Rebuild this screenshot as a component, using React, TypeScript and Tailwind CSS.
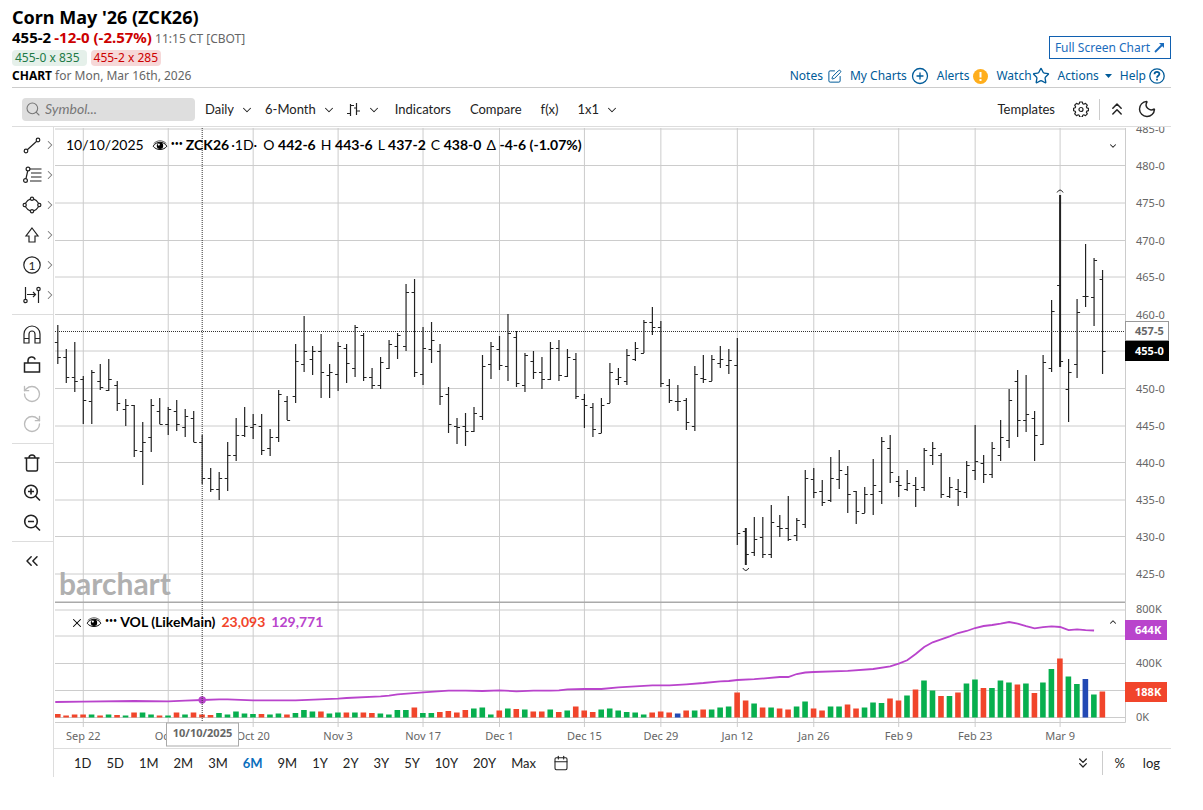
import React, { useState } from 'react';
import {
  ChevronDown, ChevronUp, ChevronRight, ChevronsDown, ChevronsLeft, ChevronsUp,
  Moon, Search, SquarePen, Star, CirclePlus, X, Calendar, RotateCcw, RotateCw,
} from 'lucide-react';

type Bar = [high: number, low: number, open: number, close: number];

// one entry per session, in plot units: high, low, open, close
const bars: Bar[] = [
  [325, 364, 342, 357], [349, 383, 357, 377], [342, 392, 377, 381], [376, 424, 379, 400],
  [370, 424, 401, 372], [364, 390, 381, 387], [359, 391, 390, 379], [381, 411, 385, 403],
  [399, 426, 409, 405], [405, 457, 405, 450], [422, 485, 451, 442], [399, 452, 437, 405],
  [398, 424, 411, 424], [407, 435, 424, 409], [400, 431, 411, 424], [409, 437, 427, 416],
  [411, 442, 418, 442], [435, 484, 442, 478], [468, 492, 478, 489], [472, 500, 489, 478],
  [442, 491, 478, 455], [418, 461, 455, 435], [407, 437, 435, 426], [414, 439, 427, 424],
  [414, 455, 426, 450], [429, 456, 448, 437], [390, 442, 437, 394], [396, 420, 401, 420],
  [344, 403, 396, 361], [316, 372, 364, 351], [346, 375, 359, 351], [334, 398, 351, 372],
  [364, 398, 375, 372], [342, 391, 374, 346], [344, 383, 348, 363], [325, 377, 368, 327],
  [333, 381, 335, 377], [368, 389, 377, 385], [357, 389, 385, 362], [340, 369, 368, 344],
  [333, 359, 346, 335], [284, 351, 346, 292], [279, 377, 292, 372], [327, 385, 374, 348],
  [322, 363, 349, 340], [344, 405, 351, 396], [387, 433, 394, 424], [418, 444, 426, 427],
  [413, 446, 426, 431], [407, 432, 431, 413], [355, 420, 416, 366], [342, 379, 364, 346],
  [336, 370, 349, 365], [314, 381, 366, 333], [331, 387, 337, 383], [353, 392, 385, 355],
  [351, 379, 361, 372], [357, 389, 372, 379], [342, 380, 379, 348], [340, 381, 348, 375],
  [349, 377, 376, 357], [353, 399, 359, 396], [394, 428, 399, 405], [403, 437, 407, 429],
  [398, 433, 433, 405], [363, 403, 403, 372], [368, 385, 379, 377], [349, 385, 381, 355],
  [342, 361, 359, 348], [320, 353, 353, 322], [307, 335, 322, 327], [321, 387, 327, 383],
  [379, 403, 385, 400], [385, 411, 401, 401], [398, 430, 400, 422], [366, 431, 426, 374],
  [355, 383, 378, 379], [355, 381, 381, 359], [346, 368, 363, 359], [349, 374, 365, 360],
  [338, 545, 365, 533], [528, 565, 531, 554], [517, 556, 552, 539], [517, 558, 537, 554],
  [505, 558, 554, 522], [515, 537, 526, 528], [496, 541, 528, 539], [518, 541, 535, 520],
  [470, 528, 524, 478], [468, 498, 479, 492], [480, 506, 491, 502], [457, 502, 500, 478],
  [450, 489, 479, 470], [466, 513, 474, 494], [491, 524, 491, 511], [487, 513, 513, 494],
  [459, 515, 494, 485], [437, 504, 491, 441], [435, 483, 448, 472], [476, 497, 481, 485],
  [470, 491, 489, 483], [477, 507, 485, 489], [448, 491, 487, 450], [442, 465, 455, 448],
  [453, 498, 455, 494], [477, 498, 496, 487], [479, 506, 489, 491], [461, 498, 492, 465],
  [425, 480, 470, 461], [455, 483, 463, 474], [442, 478, 474, 448], [420, 461, 455, 437],
  [389, 448, 440, 400], [370, 437, 381, 420], [375, 432, 420, 414], [411, 461, 418, 435],
  [355, 445, 444, 362], [300, 372, 368, 311], [195, 367, 285, 361], [359, 422, 389, 372],
  [299, 378, 364, 312], [244, 307, 296, 296], [258, 326, 297, 260], [270, 374, 279, 351],
];

// r = down day, g = up day, b = unchanged; the number is the height of the column
const volumes = (
  'r3.5 r2 r3 r3 g3 r2 g3 r2.5 g2 r5 g5 g3 r2 g2 r5 g3 r5 r3 r2.5 g4.5 g3 g6 g4 g3.5 r3.5 g3 g4 r3 g4.5 g7.5 g6 ' +
  'r6 g4 g5 r5 g5 r5 r4.5 g4 g3 g7.5 g7.5 r10 g4.5 g4.5 r5.5 r6.5 r5 r7.5 g9 g10 g3 r7 g9 r8.5 g8 r6 r6 g8 r5.5 ' +
  'g7 r11 r7 r5.5 g8 g9 g7 g5.5 g5 g3 r5 r6 r5 b4 r7 g7 r8 g8 g10 g11 r25 r17 g14 r10 g10 r9 r8 g11 g16 r9 r7 ' +
  'g11 g11 r13 r9 g10 g15 g14.5 r19 r17 g22 r28 g37 g27 r21.5 g21.5 r25 g34 g38 r29.5 g29.5 g37 g35 r33 g34 r24.5 ' +
  'g35 g48.5 r59 g41 g33.5 b38.5 g23 r26'
).split(' ');

const volumeFill: Record<string, string> = {
  r: '#f1452b',
  g: '#07af4e',
  b: '#2349b4',
};

// open interest: session index, y
const openInterest: [number, number][] = [
  [-0.3, 702], [3, 701.7], [9, 701], [13, 701.3], [15, 700.6], [17, 700], [19, 699.3], [20, 699.3], [23, 700.3],
  [28, 700.3], [33, 698.7], [34, 698], [38, 696.4], [39, 695.7], [40, 694.3], [43, 692.3], [46, 690.7],
  [48, 690.7], [50, 691], [52, 690.4], [54, 691.3], [56, 690.7], [58, 690.7], [59, 690.4], [60, 689.4],
  [62, 689], [64, 689], [66, 687.3], [68, 686.4], [70, 685.3], [72, 685.3], [74, 684.3], [76, 683],
  [78, 681.3], [79, 681], [80, 680], [82, 679.2], [85, 677], [86, 677], [87, 674], [88, 672.5], [89, 672],
  [93, 670.8], [96, 669], [98, 666.4], [99, 663.7], [100, 660.3], [101, 654], [102, 647], [103, 642.3],
  [104, 639.3], [105, 636.3], [106, 633], [107, 631], [108, 628], [109, 626], [110, 625], [111, 623.7],
  [112, 622], [113, 623.7], [114, 626.2], [115, 628.3], [116, 627.2], [117, 626.3], [118, 627], [119, 630.2],
  [120, 629.4], [121, 630.2], [122, 630.5],
];

const priceAxis: [string, number][] = [
  ['485-0', 129], ['480-0', 165.5], ['475-0', 203], ['470-0', 240.5], ['465-0', 277], ['460-0', 314.5],
  ['455-0', 351], ['450-0', 388.5], ['445-0', 426], ['440-0', 462.5], ['435-0', 500], ['430-0', 536.5],
  ['425-0', 574],
];

const volumeAxis: [string, number][] = [['800K', 610], ['', 636], ['400K', 663.5], ['', 690.5], ['0K', 717.5]];

const dateAxis: [string, number][] = [
  ['Sep 22', 3], ['Oct 6', 13], ['Oct 20', 23], ['Nov 3', 33], ['Nov 17', 43], ['Dec 1', 52], ['Dec 15', 62],
  ['Dec 29', 71], ['Jan 12', 80], ['Jan 26', 89], ['Feb 9', 99], ['Feb 23', 108], ['Mar 9', 118],
];

const ranges = ['1D', '5D', '1M', '2M', '3M', '6M', '9M', '1Y', '2Y', '3Y', '5Y', '10Y', '20Y', 'Max'];

const x = (i: number) => 57.8 + i * 8.494;

function Icon({ children, size = 20, className = '' }: { children: React.ReactNode; size?: number; className?: string }) {
  return (
    <svg width={size} height={size} viewBox="0 0 20 20" fill="none" stroke="currentColor" strokeWidth="1.2" className={`shrink-0 ${className}`}>
      {children}
    </svg>
  );
}

function EyeIcon() {
  return (
    <Icon size={16}>
      <path d="M1.5 11.5C5 5 15 5 18.5 11.5C15 17 5 17 1.5 11.5Z" strokeWidth="1.2" />
      <path d="M2 8.500C6 3.500 14 3.500 18 8.500" strokeWidth="0.800" />
      <circle cx="10" cy="11" r="4" fill="currentColor" stroke="none" />
      <circle cx="8.5" cy="9.400" r="1.400" fill="white" stroke="none" />
    </Icon>
  );
}

function GearIcon() {
  return (
    <svg width="16" height="16" viewBox="0 0 16 16" fill="none" stroke="currentColor" strokeWidth="1.2" strokeLinejoin="round">
      <path d="M6.7 1h2.6l.5 1.8 1 .4 1.7-.9 1.8 1.8-.9 1.7.4 1 1.7.5v2.4l-1.7.5-.4 1 .9 1.7-1.8 1.8-1.7-.9-1 .4-.5 1.8H6.7l-.5-1.8-1-.4-1.7.9-1.8-1.8.9-1.7-.4-1L.6 9.7V7.3l1.600-.5.4-1-.9-1.700 1.800-1.800 1.700.9 1-.4Z" />
      <circle cx="8" cy="8.5" r="2" />
    </svg>
  );
}

const drawingTools = [
  {
    label: 'Trend line',
    icon: <><path d="M5.3 14.7L14.7 6.3" /><circle cx="4" cy="16" r="1.8" /><circle cx="16" cy="5" r="1.8" /></>,
  },
  {
    label: 'Fibonacci',
    icon: <><path d="M4 13.5L5.7 6M8 4H19.5M9 8H19.5M9 12H19.5M8 16H19.5" /><circle cx="3.5" cy="15.5" r="1.9" /><circle cx="6" cy="4" r="1.9" /></>,
  },
  {
    label: 'Shapes',
    icon: <><path d="M3.5 8.3Q5.5 5 8.3 4.2M11.7 4.2Q14.5 5 16.5 8.3M16.5 11.7Q14.5 15 11.7 15.8M8.3 15.8Q5.5 15 3.5 11.7" /><circle cx="10" cy="3.7" r="1.6" /><circle cx="17.3" cy="10" r="1.6" /><circle cx="10" cy="16.3" r="1.6" /><circle cx="2.7" cy="10" r="1.6" /></>,
  },
  { label: 'Arrow', icon: <path d="M10 3L16 11H13V17H7V11H4Z" /> },
  {
    label: 'Elliott wave',
    icon: <><circle cx="10" cy="10" r="8.2" /><text x="10" y="14.500" textAnchor="middle" fontFamily="Lato" fontSize="12" fill="currentColor" stroke="none">1</text></>,
  },
  {
    label: 'Measure',
    icon: <><path d="M3.5 2V14.3M16.5 5.7V18M5 9.5H13.5M11 7L13.5 9.5L11 12" /><circle cx="3.5" cy="16" r="1.7" /><circle cx="16.5" cy="4" r="1.7" /></>,
  },
];

function ToolButton({ label, muted, className = '', children }: { label: string; muted?: boolean; className?: string; children: React.ReactNode }) {
  return (
    <button
      type="button"
      aria-label={label}
      className={`flex h-[30px] w-10 items-center justify-center ${muted ? 'text-[#bbb]' : 'text-[#222]'} ${className}`}
    >
      {children}
    </button>
  );
}

function Dropdown({ label, value, options }: { label: string; value: string; options: string[] }) {
  return (
    <label className="relative flex items-center">
      <select
        aria-label={label}
        defaultValue={value}
        className="field-sizing-content appearance-none bg-transparent pr-5 leading-5 outline-none"
      >
        {options.map((option) => (
          <option key={option}>{option}</option>
        ))}
      </select>
      <ChevronDown className="pointer-events-none absolute top-1 right-0 h-[14px] w-[14px]" strokeWidth={1.8} />
    </label>
  );
}

function AxisTag({ y, text, fill, stroke = fill, color = 'white', width = 42 }: { y: number; text: string; fill: string; stroke?: string; color?: string; width?: number }) {
  return (
    <g>
      <rect x="1125.5" y={y + 0.5} width={width} height="19" fill={fill} stroke={stroke} />
      <text x="1135" y={y + 14} fontSize="11" fontWeight="700" fill={color}>{text}</text>
    </g>
  );
}

function PriceChart() {
  return (
    <svg viewBox="54 127 1117 621" className="block w-full" fontFamily="'Noto Sans', sans-serif">
      {/* Grid */}
      <g stroke="#ccc" fill="none">
        {priceAxis.map(([label, y]) => <path key={label} d={`M55 ${y}H1125`} />)}
        {volumeAxis.map(([, y]) => <path key={y} d={`M55 ${y}H1125`} />)}
        {dateAxis.map(([label, i]) => <path key={label} d={`M${x(i)} 128V727`} />)}
        <path d="M55 722.5H1125.5V128" />
      </g>
      <path d="M55 602.3H1125" stroke="#aaa" strokeWidth="1.6" />

      {/* Axis labels */}
      <g fontSize="11" fill="#666">
        {priceAxis.map(([label, y]) => <text key={label} x="1136" y={y + 4}>{label}</text>)}
        {volumeAxis.map(([label, y]) => <text key={y} x="1136" y={y + 3}>{label}</text>)}
        {dateAxis.map(([label, i]) => <text key={label} x={x(i)} y="740" textAnchor="middle">{label}</text>)}
      </g>

      {/* Prices */}
      <g stroke="#222" fill="none">
        {bars.map(([high, low, open, close], i) => (
          <g key={i}>
            <path d={`M${x(i)} ${high}V${low}`} strokeWidth={i === 81 || i === 118 ? 2 : 1.2} />
            <path d={`M${x(i) - 3} ${open + 0.5}H${x(i)} M${x(i)} ${close + 0.5}H${x(i) + 3}`} />
          </g>
        ))}
        <path d={`M${x(118) - 3} 192.5Q${x(118)} 187.5 ${x(118) + 3} 192.5`} />
        <path d={`M${x(81) - 3} 568Q${x(81)} 573 ${x(81) + 3} 568`} />
      </g>

      {/* Volume and open interest */}
      {volumes.map((item, i) => {
        const height = Number(item.slice(1));
        return <rect key={i} x={Math.max(x(i) - 3, 55)} y={717.5 - height} width="5.6" height={height} fill={volumeFill[item[0]]} />;
      })}
      <polyline points={openInterest.map(([i, y]) => `${x(i)},${y}`).join(' ')} fill="none" stroke="#b944cc" strokeWidth="1.8" />
      <circle cx={x(17)} cy="700" r="3.7" fill="#b944cc" />

      {/* Crosshair */}
      <path d={`M${x(17)} 128V722 M55 331.5H1125`} stroke="#333" strokeDasharray="1 1" />
      <rect x="166.5" y="723" width="72" height="23" fill="white" stroke="#aaa" />
      <text x="202.5" y="737" fontSize="11" fontWeight="700" fill="#666" textAnchor="middle">10/10/2025</text>

      <AxisTag y={321} text="457-5" fill="white" stroke="#999" color="#666" width={43} />
      <AxisTag y={341} text="455-0" fill="black" width={43} />
      <AxisTag y={620} text="644K" fill="#b944cc" width={41} />
      <AxisTag y={682} text="188K" fill="#f1452b" width={41} />
    </svg>
  );
}

function Header() {
  return (
    <header className="flex items-end justify-between border-b border-[#ccc] pt-[7px] pb-[3px] font-['Noto_Sans',sans-serif] text-xs text-[#666]">
      <div>
        <h1 className="text-lg leading-5 font-bold text-black">Corn May '26 (ZCK26)</h1>
        <p className="leading-5">
          <span className="text-[15px] leading-5 font-bold text-black">455-2</span>{' '}
          <span className="text-[15px] leading-5 font-bold text-[#c00]">-12-0 (-2.57%)</span> 11:15 CT [CBOT]
        </p>
        <p className="flex gap-1 pt-px pb-[2px] leading-4">
          <span className="rounded-sm bg-[#e5f0ea] pr-[7px] pl-[3px] text-[#217a46]">455-0 x 835</span>
          <span className="rounded-sm bg-[#f6d8d8] px-[3px] text-[#c00]">455-2 x 285</span>
        </p>
        <p className="leading-4">
          <b className="text-black">CHART</b> for Mon, Mar 16th, 2026
        </p>
      </div>

      <div className="flex flex-col items-end gap-[9px] text-[#005b99]">
        <a href="#full" className="flex h-[23px] items-center gap-1 border border-[#1060b0] px-[5px] text-[#1a6cbd]">
          Full Screen Chart
          <svg width="11" height="11" viewBox="0 0 11 11" fill="none" stroke="currentColor" strokeWidth="1.8">
            <path d="M1 10L8 3" />
            <path d="M5 1H10V6Z" fill="currentColor" stroke="none" />
          </svg>
        </a>
        <nav className="flex h-4 items-center gap-2 pr-[6px]">
          <a href="#notes" className="flex items-center gap-1">Notes <SquarePen className="h-[15px] w-[15px]" strokeWidth={1.6} /></a>
          <a href="#charts" className="flex items-center gap-1">My Charts <CirclePlus className="h-[18px] w-[18px]" strokeWidth={1.7} /></a>
          <a href="#alerts" className="flex items-center gap-1">
            Alerts
            <svg width="15" height="15" viewBox="0 0 15 15">
              <circle cx="7.5" cy="7.5" r="7.5" fill="#ffae1c" />
              <path d="M7.5 3V8.5M7.5 10V12" stroke="white" strokeWidth="2" />
            </svg>
          </a>
          <a href="#watch" className="flex items-center">Watch <Star className="h-[18px] w-[18px]" strokeWidth={1.8} /></a>
          <button type="button" className="flex items-center gap-[6px]">
            Actions
            <svg width="7" height="4" viewBox="0 0 7 4"><path d="M0 0H7L3.5 4Z" fill="currentColor" /></svg>
          </button>
          <a href="#help" className="flex items-center gap-[3px]">
            Help
            <svg width="16" height="16" viewBox="0 0 16 16" fill="none" stroke="currentColor">
              <circle cx="8" cy="8" r="7.2" strokeWidth="1.3" />
              <path d="M5.5 6.2C5.6 3.2 10.5 3.3 10.4 6C10.3 7.8 8 7.8 8 9.7M8 10.8V12.6" strokeWidth="1.8" />
            </svg>
          </a>
        </nav>
      </div>
    </header>
  );
}

function Toolbar() {
  return (
    <div className="flex h-[39px] items-center border-b border-[#ddd] pt-1 pr-[14px] pl-[10px] text-[13px]">
      <label className="mr-[10px] flex h-[23px] w-[173px] items-center gap-1 rounded bg-[#dedede] px-[3px]">
        <Search className="h-4 w-4 shrink-0 text-[#777]" strokeWidth={1.6} />
        <input aria-label="Symbol" placeholder="Symbol..." className="w-full min-w-0 bg-transparent text-sm italic outline-none placeholder:text-[#777]" />
      </label>
      <div className="flex items-center gap-[11px]">
        <Dropdown label="Interval" value="Daily" options={['Daily', 'Weekly', 'Monthly']} />
        <Dropdown label="Period" value="6-Month" options={['3-Month', '6-Month', '1-Year']} />
        <button type="button" aria-label="Bar type" className="flex items-center gap-[6px]">
          <svg width="14" height="14" viewBox="0 0 14 14" fill="none" stroke="currentColor" strokeWidth="1.2">
            <path d="M3.5 2V14M0 11.5H3.5M3.5 3.5H7M9.5 1V13M7 6H9.5M9.5 9H13" />
          </svg>
          <ChevronDown className="mt-[2px] h-[14px] w-[14px]" strokeWidth={1.8} />
        </button>
      </div>
      <div className="ml-[14px] flex items-center gap-[19px]">
        <button type="button">Indicators</button>
        <button type="button">Compare</button>
        <button type="button">f(x)</button>
        <Dropdown label="Layout" value="1x1" options={['1x1', '1x2', '2x2']} />
      </div>

      <div className="ml-auto flex items-center">
        <button type="button" className="mr-[18px]">Templates</button>
        <button type="button" aria-label="Settings"><GearIcon /></button>
        <span className="mr-[7px] ml-[10px] h-[21px] w-px bg-[#ccc]" />
        <button type="button" aria-label="Collapse"><ChevronsUp className="h-5 w-5" strokeWidth={1.8} /></button>
        <button type="button" aria-label="Dark mode" className="ml-[10px]"><Moon className="h-5 w-5" strokeWidth={1.7} /></button>
      </div>
    </div>
  );
}

function SideTools() {
  return (
    <aside className="w-[42px] shrink-0 border-r border-[#ddd]">
      <div className="border-b border-[#ddd] pt-[3px] pb-1">
        {drawingTools.map((tool) => (
          <ToolButton key={tool.label} label={tool.label} className="relative">
            <Icon>{tool.icon}</Icon>
            <ChevronRight className="absolute right-[-5px] h-[14px] w-[14px] text-[#777]" strokeWidth={1.8} />
          </ToolButton>
        ))}
      </div>
      <div className="border-b border-[#ddd] py-1">
        <ToolButton label="Magnet">
          <Icon>
            <path d="M2 19V10A8 8 0 0 1 18 10V19H13V10A3 3 0 0 0 7 10V19Z M2 14.5H7 M13 14.5H18" />
          </Icon>
        </ToolButton>
        <ToolButton label="Unlock">
          <Icon className="[stroke-width:1.5]">
            <path d="M2.5 9H17.5V18H2.5Z M6 9V6.5A3.7 3.7 0 0 1 13.2 5.5" />
          </Icon>
        </ToolButton>
        <ToolButton label="Undo" muted><RotateCcw className="h-5 w-5" strokeWidth={1.6} /></ToolButton>
        <ToolButton label="Redo" muted><RotateCw className="h-5 w-5" strokeWidth={1.6} /></ToolButton>
      </div>
      <div className="border-b border-[#ddd] pt-1 pb-[3px]">
        <ToolButton label="Delete">
          <Icon className="[stroke-width:1.5]">
            <path d="M2.5 5H17.5 M4.5 5V16.5Q4.5 18 6 18H14Q15.5 18 15.5 16.5V5 M7 5Q7 2 10 2Q13 2 13 5" />
          </Icon>
        </ToolButton>
        <ToolButton label="Zoom in">
          <Icon className="[stroke-width:1.6]">
            <circle cx="9" cy="8.5" r="6.3" /><path d="M13.5 13L18 17.5M6 8.5H12M9 5.5V11.5" />
          </Icon>
        </ToolButton>
        <ToolButton label="Zoom out">
          <Icon className="[stroke-width:1.6]">
            <circle cx="9" cy="8.5" r="6.3" /><path d="M13.5 13L18 17.5M6 8.5H12" />
          </Icon>
        </ToolButton>
      </div>
      <div className="pt-1">
        <ToolButton label="Hide tools"><ChevronsLeft className="h-5 w-5" strokeWidth={1.8} /></ToolButton>
      </div>
    </aside>
  );
}

export default function App() {
  const [range, setRange] = useState('6M');

  return (
    <main className="min-h-screen bg-white pr-8 pb-8 pl-3 font-[Lato,sans-serif] text-sm text-[#222]">
      <Header />
      <Toolbar />
      <div className="flex">
        <SideTools />
        <section className="min-w-0 flex-1">
          <div className="relative">
            <PriceChart />

            {/* Legends over the plot */}
            <div className="absolute top-2 left-3 flex items-center leading-5 text-black">
              <span className="mr-2">10/10/2025</span>
              <EyeIcon />
              <span className="mx-[3px] pb-1 text-[7px] leading-3">•••</span>
              <b>ZCK26</b>
              <span className="mr-[6px] ml-[2px]">·1D·</span>
              <span className="flex gap-[5px]">
                <span>O <b>442-6</b></span>
                <span>H <b>443-6</b></span>
                <span>L <b>437-2</b></span>
                <span>C <b>438-0</b></span>
                <span>Δ <b>-4-6 (-1.07%)</b></span>
              </span>
            </div>
            <button type="button" aria-label="Show legend" className="absolute top-[14px] right-[53px]"><ChevronDown className="h-[10px] w-[10px]" strokeWidth={2.5} /></button>

            <span className="absolute top-[438px] left-[5px] text-[30px] leading-9 font-bold text-[#b0b0b0]">barchart</span>

            <div className="absolute top-[485px] left-4 flex items-center leading-5 text-black">
              <X className="mt-[2px] mr-[2px] h-[14px] w-[14px]" strokeWidth={1.8} />
              <EyeIcon />
              <span className="mx-[3px] pb-1 text-[7px] leading-3">•••</span>
              <b>VOL (LikeMain)</b>
              <b className="ml-[6px] text-[#f1452b]">23,093</b>
              <b className="ml-[6px] text-[#b944cc]">129,771</b>
            </div>
            <button type="button" aria-label="Collapse volume" className="absolute top-[490px] right-[53px]"><ChevronUp className="h-[10px] w-[10px]" strokeWidth={2.5} /></button>
          </div>

          {/* Ranges */}
          <div className="flex h-[29px] items-center border-t border-[#ddd] pr-[11px] pl-5 text-[13px]">
            <div className="flex gap-[15px]">
              {ranges.map((item) => (
                <button
                  key={item}
                  type="button"
                  onClick={() => setRange(item)}
                  className={item === range ? 'font-bold text-[#0a6ebd]' : ''}
                >
                  {item}
                </button>
              ))}
            </div>
            <button type="button" aria-label="Pick dates" className="ml-[17px]"><Calendar className="h-4 w-4" strokeWidth={1.6} /></button>
            <button type="button" aria-label="More" className="ml-auto"><ChevronsDown className="h-4 w-4" strokeWidth={1.9} /></button>
            <span className="mx-[11px] h-6 w-px bg-[#ccc]" />
            <button type="button">%</button>
            <button type="button" className="ml-[18px]">log</button>
          </div>
        </section>
      </div>
    </main>
  );
}
